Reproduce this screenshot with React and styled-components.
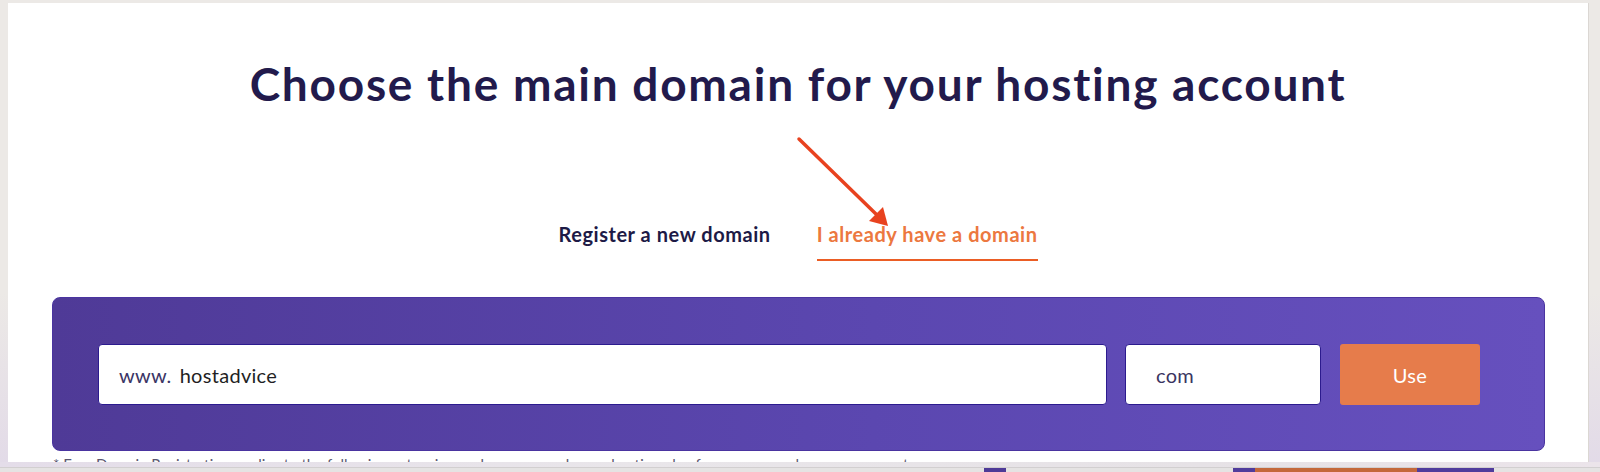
import React from "react"
import styled, { createGlobalStyle } from "styled-components"

const GlobalStyle = createGlobalStyle`
  html, body {
    margin: 0;
    padding: 0;
  }
  body {
    background: #ebe8e5;
    font-family: Lato, "Liberation Sans", sans-serif;
    overflow: hidden;
  }
`

const Page = styled.div`
  height: 472px;
  display: flex;
  flex-direction: column;
  background: linear-gradient(180deg, #ece9e6 0%, #ece9e6 62%, #e2dae8 100%);
`

const Card = styled.main`
  position: relative;
  flex-shrink: 0;
  margin: 3px 11px 0 8px;
  height: 459px;
  background: #fff;
  border-right: 1px solid #dbd7d3;
  overflow: hidden;
  display: flex;
  flex-direction: column;
  align-items: center;

  & > * {
    flex-shrink: 0;
  }
`

const Title = styled.h1`
  margin: 53px 0 0;
  font-size: 46px;
  line-height: 56px;
  font-weight: 700;
  color: #221a4c;
  letter-spacing: 1.75px;
`

const Tabs = styled.nav`
  display: flex;
  gap: 46px;
  margin-top: 110px;
`

const Tab = styled.button`
  border: 0;
  background: none;
  padding: 0 0 13px;
  font-family: inherit;
  font-size: 20px;
  font-weight: 700;
  line-height: 24px;
  letter-spacing: 0.55px;
  color: ${p => (p.$active ? "#ec7840" : "#1d1a46")};
  border-bottom: 2px solid ${p => (p.$active ? "#eb5d24" : "transparent")};
  cursor: pointer;
`

const Panel = styled.section`
  align-self: stretch;
  margin: 36px 43px 0 44px;
  height: 154px;
  box-sizing: border-box;
  padding: 46px 64px 0 45px;
  border-radius: 8px;
  border: 1px solid #4a34a0;
  background: linear-gradient(90deg, #4f3a97 0%, #5b47b0 55%, #6650be 100%);
  display: flex;
  gap: 18px;
`

const Field = styled.div`
  box-sizing: border-box;
  height: 61px;
  flex: ${p => (p.$grow ? "1" : `0 0 ${p.$w}px`)};
  background: #fff;
  border: 1px solid #2c1b8e;
  border-radius: 4px;
  display: flex;
  align-items: center;
  padding-left: ${p => p.$pad}px;
  font-size: 20px;
  letter-spacing: 0.3px;
  color: #1f1f24;
`

const Prefix = styled.span`
  color: #3b3566;
  margin-right: 8px;
`

const Tld = styled.span`
  color: #3a3561;
`

const UseButton = styled.button`
  flex: 0 0 140px;
  height: 61px;
  margin-left: 1px;
  border: 0;
  border-radius: 3px;
  background: #e67c4b;
  color: #fff;
  font-family: inherit;
  font-size: 20px;
  letter-spacing: 0.3px;
  cursor: pointer;
`

const Note = styled.p`
  align-self: stretch;
  margin: 4px 0 0 45px;
  font-size: 15px;
  line-height: 18px;
  color: #5a5670;
  white-space: nowrap;
`

const Arrow = styled.svg`
  position: absolute;
  left: 777px;
  top: 128px;
`

const BottomBar = styled.div`
  flex: 1;
  display: flex;
  align-items: flex-end;
  background: linear-gradient(90deg, #e4dde9 0%, #e9e6ea 40%, #e6e2e6 75%, #ebe4ea 100%);
`

const Strip = styled.div`
  height: 4px;
  width: 100%;
  border-top: 1px solid #d2cfd0;
  background: #e5e3e3;
  display: flex;
`

const Chip = styled.span`
  display: block;
  margin-left: ${p => p.$left}px;
  width: ${p => p.$w}px;
  background: ${p => p.$c};
`

export default function App() {
  return (
    <>
      <GlobalStyle />
      <Page>
        <Card>
          <Title>Choose the main domain for your hosting account</Title>
          <Tabs>
            <Tab>Register a new domain</Tab>
            <Tab $active>I already have a domain</Tab>
          </Tabs>
          <Panel>
            <Field $grow $pad={20}>
              <Prefix>www.</Prefix>hostadvice
            </Field>
            <Field $w={196} $pad={30}>
              <Tld>com</Tld>
            </Field>
            <UseButton>Use</UseButton>
          </Panel>
          <Note>
            * Free Domain Registration applies to the following extensions, when you purchase a hosting plan for one year or longer: .com, .net, .org
          </Note>
          <Arrow width="120" height="110" viewBox="0 0 120 110">
            <line x1="14" y1="8" x2="92" y2="84" stroke="#e8421f" strokeWidth="3.5" strokeLinecap="round" />
            <polygon points="103,95 84,90 98,76" fill="#e8421f" />
          </Arrow>
        </Card>
        <BottomBar>
          <Strip>
            <Chip $left={984} $w={22} $c="#4e3a97" />
            <Chip $left={227} $w={22} $c="#503c9c" />
            <Chip $left={0} $w={162} $c="#c4683b" />
            <Chip $left={0} $w={77} $c="#503c9c" />
          </Strip>
        </BottomBar>
      </Page>
    </>
  )
}
